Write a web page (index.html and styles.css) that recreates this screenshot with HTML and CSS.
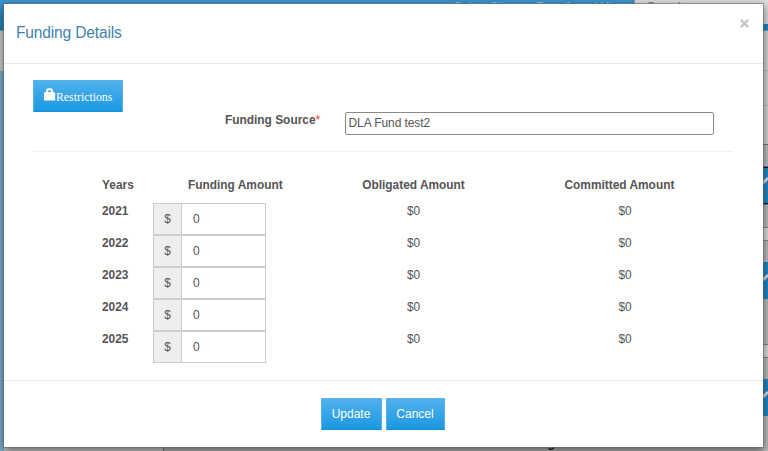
FILE: index.html
```html
<!DOCTYPE html>
<html lang="en">
<head>
<meta charset="utf-8">
<title>Funding Details</title>
<link rel="stylesheet" href="styles.css">
</head>
<body>
<div class="page" aria-hidden="true">
  <div class="page-left">
    <div class="page-nav"></div>
    <div class="page-sub"></div>
    <div class="page-side"></div>
  </div>
  <div class="page-main">
    <div class="page-top"><span class="site">Select Site</span><span class="user">Transferred Hi</span><span class="search">Search</span></div>
    <div class="page-foot"><span class="foot-side"></span><span class="foot-text">Funding</span></div>
  </div>
  <div class="page-right">
    <div class="r-top"></div>
    <div class="r-bar"></div>
    <div class="r-row r-row-a"></div>
    <div class="r-row r-row-b"></div>
    <div class="r-row r-row-c"></div>
    <div class="r-gap r-gap-a"></div>
    <div class="r-btn r-focus"><svg viewBox="0 0 5 38"><path d="M0 18L5 13"/></svg></div>
    <div class="r-gap r-gap-b"></div>
    <div class="r-field"></div>
    <div class="r-gap r-gap-c"></div>
    <div class="r-btn"><svg viewBox="0 0 5 38"><path d="M0 18L5 13"/></svg></div>
    <div class="r-gap r-gap-d"></div>
    <div class="r-field"></div>
    <div class="r-gap r-gap-e"></div>
    <div class="r-btn"><svg viewBox="0 0 5 38"><path d="M0 18L5 13"/></svg></div>
    <div class="r-gap r-gap-f"></div>
  </div>
</div>

<div class="modal" role="dialog">
  <header class="modal-head">
    <h1>Funding Details</h1>
    <span class="close" role="button" aria-label="Close"><svg viewBox="0 0 8 8"><path d="M.8 .8L7.2 7.2M7.2 .8L.8 7.2"/></svg></span>
  </header>
  <section class="modal-body">
    <button class="btn restrict"><svg viewBox="0 0 12 13"><path d="M3.2 5V2.6Q3.2 1.2 4.6 1.2H6.6Q8 1.2 8 2.6V5" class="shackle"/><path d="M1 4H10.2L11.2 5.4V12.6H0V5.4Z" class="case"/></svg>Restrictions</button>
    <div class="source">
      <label for="src">Funding Source<span class="req">*</span></label>
      <input id="src" value="DLA Fund test2">
    </div>
    <div class="grid">
      <div class="row head"><b>Years</b><b class="fund">Funding Amount</b><b>Obligated Amount</b><b class="com">Committed Amount</b></div>
      <div class="row"><b>2021</b><div class="money"><span>$</span><input value="0"></div><span class="amt">$0</span><span class="amt last">$0</span></div>
      <div class="row"><b>2022</b><div class="money"><span>$</span><input value="0"></div><span class="amt">$0</span><span class="amt last">$0</span></div>
      <div class="row"><b>2023</b><div class="money"><span>$</span><input value="0"></div><span class="amt">$0</span><span class="amt last">$0</span></div>
      <div class="row"><b>2024</b><div class="money"><span>$</span><input value="0"></div><span class="amt">$0</span><span class="amt last">$0</span></div>
      <div class="row"><b>2025</b><div class="money"><span>$</span><input value="0"></div><span class="amt">$0</span><span class="amt last">$0</span></div>
    </div>
  </section>
  <footer class="modal-foot">
    <button class="btn update">Update</button>
    <button class="btn cancel">Cancel</button>
  </footer>
</div>
</body>
</html>
```

FILE: styles.css
```css
* { box-sizing: border-box; }
body {
  margin: 0;
  width: 768px;
  height: 451px;
  overflow: hidden;
  position: relative;
  font: 11.9px/17px "Liberation Sans", Arial, sans-serif;
  color: #555;
}
svg { display: block; }

/* Page behind the dialog */
.page { display: flex; height: 451px; background: #999; }
.page-left { width: 4px; display: flex; flex-direction: column; }
.page-nav { height: 31px; background: linear-gradient(#3b9ad6, #1f83c0); border-bottom: 1px solid #79a4bf; }
.page-sub { height: 40px; background: #cfcfcf; }
.page-side { flex: 1; background: #7cb0cf; }
.page-main { width: 759px; display: flex; flex-direction: column; justify-content: space-between; }
.page-top { height: 24px; display: flex; background: #3a96d2; color: #a3c6dd; line-height: 15px; padding-left: 450px; white-space: nowrap; }
.site { width: 82px; }
.user { width: 98px; }
.search { flex: 1; padding-left: 12px; background: #dedede; border-left: 1px solid #999; color: #777; }
.page-foot { height: 14px; display: flex; background: #b4b4b4; overflow: hidden; }
.foot-side { width: 160px; background: #cacaca; border-right: 1px solid #777; }
.foot-text { margin-left: 342px; width: 60px; padding-left: 2px; line-height: 12px; font-weight: bold; color: #222; }

.page-right { width: 5px; display: flex; flex-direction: column; background: #bebebe; }
.r-top { height: 24px; background: #dedede; }
.r-bar { height: 7px; background: #2189c8; border-bottom: 1px solid #6d9db9; }
.r-row { background: #d8d8d8; border-bottom: 1px solid #bbb; }
.r-row-a { height: 40px; }
.r-row-b { height: 35px; }
.r-row-c { height: 39px; border-color: #777; }
.r-gap-a { height: 22px; }
.r-gap-b { height: 23px; }
.r-gap-c { height: 21px; }
.r-gap-d { height: 45px; }
.r-gap-e { height: 21px; }
.r-gap-f { flex: 1; }
.r-btn { height: 37px; background: #1d87c8; overflow: hidden; }
.r-btn svg { width: 5px; height: 38px; }
.r-btn path { fill: none; stroke: #e2e2e2; stroke-width: 3; }
.r-focus { border: solid #071019; border-width: 1px 0; outline: 1px solid #438ab4; outline-offset: 0; }
.r-focus svg { margin-top: -3px; }
.r-field { height: 14px; background: #dedede; border: solid #888; border-width: 1px 0; }

/* Dialog */
.modal {
  position: absolute;
  left: 3px;
  top: 3px;
  width: 761px;
  height: 445px;
  background: #fff;
  background-clip: padding-box;
  border: 1px solid rgba(110, 110, 110, .55);
  box-shadow: 0 3px 9px rgba(0, 0, 0, .5);
  display: flex;
  flex-direction: column;
}
.modal-head {
  height: 60px;
  flex: none;
  display: flex;
  justify-content: space-between;
  border-bottom: 1px solid #e8e8e8;
}
.modal-head h1 {
  margin: 17px 0 0 12px;
  font-size: 15.6px;
  letter-spacing: -.18px;
  line-height: 23px;
  font-weight: normal;
  color: #3f83ac;
}
.close { padding: 15px 14px 0 0; }
.close svg { width: 9px; height: 9px; }
.close path { stroke: #c6c6c6; stroke-width: 2; }

.modal-body { flex: 1; padding: 16px 30px 0 29px; }
.btn {
  border: 1px solid #59b3e9;
  border-bottom-color: #1590dc;
  height: 32px;
  padding: 0;
  color: #fff;
  font: 12px/16px "Liberation Sans", Arial, sans-serif;
  background: linear-gradient(#50b1ec, #1b98e2);
}
.restrict {
  display: flex;
  width: 90px;
  padding: 8px 0 0 10px;
  font-family: "Liberation Serif", "Times New Roman", serif;
  font-size: 11.8px;
}
.restrict svg { width: 12px; height: 13px; margin-top: -1px; }
.shackle { fill: none; stroke: #fff; stroke-width: 2; }
.case { fill: #fff; }

.source {
  display: flex;
  height: 40px;
  border-bottom: 1px solid #f0f0f0;
}
.source label { width: 312px; padding-left: 192px; font-weight: bold; }
.req { color: #f33; font-weight: normal; }
.source input {
  width: 369px;
  height: 23px;
  border: 1px solid #8a8a8a;
  border-radius: 2px;
  padding: 0 3px 2px 2.5px;
  font: 12px "Liberation Sans", Arial, sans-serif;
  letter-spacing: -.08px;
  color: #555;
}

.grid { padding: 25px 0 0 69px; }
.row {
  display: grid;
  grid-template-columns: 51px 154px 213px 1fr;
  height: 32.05px;
}
.row.head { height: 26px; }
.row > b { white-space: nowrap; }
.head .fund { padding-left: 35px; }
.head b:nth-child(3), .amt { text-align: center; }
.head .com { padding-left: 44.5px; }
.amt.last { padding-left: 98.5px; text-align: left; }
.money { display: flex; width: 113px; height: 32px; border: 1px solid #ccc; }
.money span { width: 28px; background: #eee; border-right: 1px solid #ccc; text-align: center; line-height: 30px; }
.money input {
  width: 83px;
  border: 0;
  padding: 0 11px;
  font: 12px "Liberation Sans", Arial, sans-serif;
  color: #555;
  background: #fff;
}

.modal-foot {
  height: 67px;
  flex: none;
  display: flex;
  justify-content: center;
  gap: 4px;
  padding: 17px 2px 0 0;
  border-top: 1px solid #e8e8e8;
}
.update { width: 61px; }
.cancel { width: 59px; }
```
